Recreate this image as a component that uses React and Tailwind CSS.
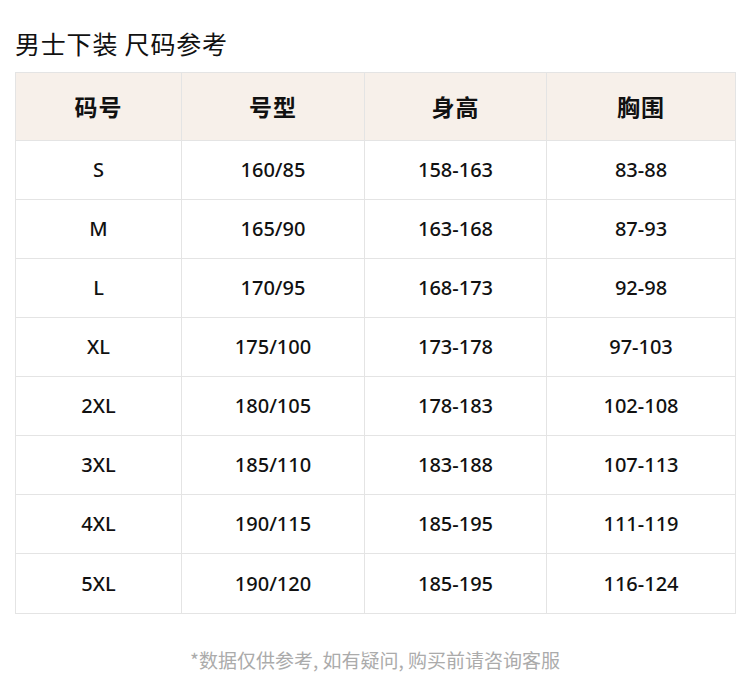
const rows = [
  ['S', '160/85', '158-163', '83-88'],
  ['M', '165/90', '163-168', '87-93'],
  ['L', '170/95', '168-173', '92-98'],
  ['XL', '175/100', '173-178', '97-103'],
  ['2XL', '180/105', '178-183', '102-108'],
  ['3XL', '185/110', '183-188', '107-113'],
  ['4XL', '190/115', '185-195', '111-119'],
  ['5XL', '190/120', '185-195', '116-124'],
]

const headers = ['码号', '号型', '身高', '胸围']

export default function App() {
  return (
    <div className="w-[750px] h-[685px] bg-white text-[#111] font-['Noto_Sans_CJK_SC',sans-serif]">
      <h1 className="pl-[15px] pt-[26px] h-[72px] text-[25px] leading-[34px] tracking-[0.8px]">男士下装 尺码参考</h1>

      <div className="mx-[15px] w-[721px] border border-[#e4e4e4] grid grid-cols-[166px_183px_182px_1fr]">
        {headers.map((h, i) => (
          <div
            key={h}
            className={`h-[68px] bg-[#f7f0ea] flex items-center justify-center text-[23px] font-bold tracking-[1px] border-b border-[#e4e4e4] ${i < 3 ? 'border-r' : ''}`}
          >
            {h}
          </div>
        ))}
        {rows.map((r, ri) =>
          r.map((c, ci) => (
            <div
              key={ri + '-' + ci}
              className={`h-[59px] flex items-center justify-center text-[20px] font-medium font-['Noto_Sans',sans-serif] border-[#e4e4e4] ${ci < 3 ? 'border-r' : ''} ${ri < rows.length - 1 ? 'border-b' : ''}`}
            >
              {c}
            </div>
          ))
        )}
      </div>

      <p className="mt-[32px] text-center text-[19px] text-[#ababab]">*数据仅供参考, 如有疑问, 购买前请咨询客服</p>
    </div>
  )
}
